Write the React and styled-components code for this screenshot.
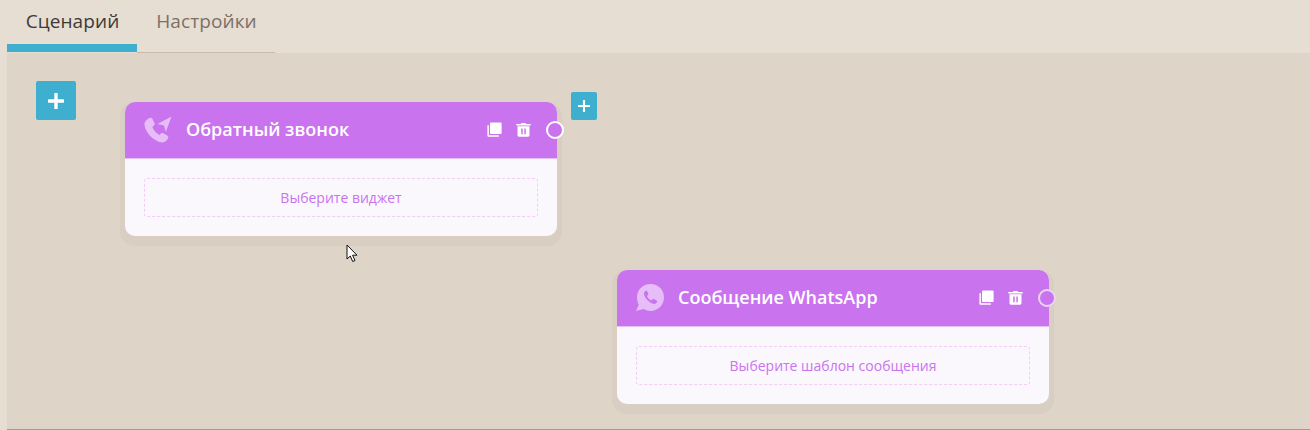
import React from 'react';
import styled, { createGlobalStyle } from 'styled-components';

const GlobalStyle = createGlobalStyle`
  html, body {
    margin: 0;
    padding: 0;
    height: 100%;
    overflow: hidden;
    background: #e6ddd3;
    font-family: "Open Sans", "Noto Sans", sans-serif;
  }
`;

const Page = styled.div`
  height: 430px;
  padding-left: 7px;
  box-sizing: border-box;
  display: flex;
  flex-direction: column;
`;

const Tabs = styled.div`
  display: flex;
  height: 53px;
  flex: none;
`;

const Tab = styled.div`
  box-sizing: border-box;
  width: ${p => p.$width}px;
  height: ${p => (p.$active ? 52 : 53)}px;
  padding: 9px 0 0 1px;
  text-align: center;
  font-size: 19px;
  letter-spacing: 0.1px;
  line-height: 25px;
  color: ${p => (p.$active ? '#3d3a38' : '#7b7167')};
  border-bottom: ${p => (p.$active ? '8px solid #3eafcf' : '1px solid #c9bbaa')};
`;

const Canvas = styled.div`
  position: relative;
  flex: 1;
  background: #ded4c7;
  border-bottom: 1px solid #9c9c9c;
`;

const AddButton = styled.div`
  position: absolute;
  left: ${p => p.$x}px;
  top: ${p => p.$y}px;
  width: ${p => p.$w}px;
  height: ${p => p.$h}px;
  display: flex;
  align-items: center;
  justify-content: center;
  background: #3eafcf;
  border-radius: 2px;
`;

const Node = styled.div`
  position: absolute;
  left: ${p => p.$x}px;
  top: ${p => p.$y}px;
  width: 432px;
  height: 134px;
  border-radius: 10px;
  background: #fbf8fd;
  box-shadow: 0 5px 1px 5px #d8cec1;
`;

const NodeHeader = styled.div`
  box-sizing: border-box;
  height: 57px;
  display: flex;
  align-items: center;
  padding: 0 0 1px 18px;
  background: #c973ee;
  border-bottom: 1px solid #e3c0f3;
  border-radius: 10px 10px 0 0;
`;

const NodeIcon = styled.svg`
  width: 30px;
  height: 30px;
  flex: none;
  fill: #e6bdf6;
`;

const NodeTitle = styled.div`
  margin: -2px 0 0 13px;
  flex: 1;
  font-size: 18px;
  font-weight: 600;
  color: #fff;
`;

const NodeActions = styled.div`
  display: flex;
  gap: 14px;
  margin-right: 26px;
`;

const ActionIcon = styled.svg`
  width: 15px;
  height: 15px;
  fill: #fff;
  display: block;
`;

const Port = styled.div`
  position: absolute;
  right: -7px;
  top: 19px;
  box-sizing: border-box;
  width: 18px;
  height: 18px;
  border-radius: 50%;
  border: 2px solid ${p => (p.$dim ? '#e8d6ee' : '#fff')};
  background: #c973ee;
`;

const NodeBody = styled.div`
  padding: 19px 19px 0;
`;

const Picker = styled.div`
  box-sizing: border-box;
  height: 39px;
  display: flex;
  align-items: center;
  justify-content: center;
  border: 1px dashed #f3cdf8;
  border-radius: 3px;
  font-size: 14px;
  color: #c973ee;
`;

const Cursor = styled.svg`
  position: absolute;
  left: 339px;
  top: 191px;
  width: 14px;
  height: 20px;
`;

const Plus = ({ size, weight }) => (
  <svg width={size} height={size} viewBox="0 0 16 16" fill="#fff">
    <rect x={8 - weight / 2} y="0" width={weight} height="16" rx="0.5" />
    <rect x="0" y={8 - weight / 2} width="16" height={weight} rx="0.5" />
  </svg>
);

const CopyIcon = () => (
  <ActionIcon viewBox="0 0 15 15">
    <path d="M4 0.500h9.600a1 1 0 0 1 1 1V11a1 1 0 0 1-1 1H4a1 1 0 0 1-1-1V1.500a1 1 0 0 1 1-1z" />
    <path d="M0.400 3.200h1.500v10h10v1.500H1.400a1 1 0 0 1-1-1z" />
  </ActionIcon>
);

const TrashIcon = () => (
  <ActionIcon viewBox="0 0 15 15">
    <path d="M0.300 2h4.500l0.700-1h4l0.700 1h4.500v1.400H0.300z" />
    <path fillRule="evenodd" d="M1.500 4.300h12v9a1.400 1.400 0 0 1-1.400 1.400H2.900a1.400 1.400 0 0 1-1.400-1.400zM5.200 6.600v5.600h1.500V6.600zM8.300 6.600v5.600h1.500V6.600z" />
  </ActionIcon>
);

const CallbackIcon = () => (
  <NodeIcon viewBox="0 0 30 30">
    <path d="M6.500 3c1.400-.6 2.400-.3 3 1l2 4.200c.4 1 .2 1.700-.6 2.400L9.300 12c1 2.900 4 6.300 7.100 8l1.500-1.500c.8-.7 1.500-.8 2.400-.3l4 2.400c1.200.8 1.300 1.800.7 3-1.200 2.300-3.200 4-5.700 3.900C11.500 27 2.200 17.500 1.500 10 1.200 6.900 3.700 4.200 6.500 3z" />
    <path d="M28.500 1.500L14.500 9l6.500 1.500 1.800 6.500z" />
  </NodeIcon>
);

const WhatsappIcon = () => (
  <NodeIcon viewBox="0 0 30 30">
    <path fillRule="evenodd" d="M15.500 1C23.200 1 29 6.800 29 14.300S23.200 28 15.500 28c-2.600 0-4.900-.7-6.900-1.900L1 28l2.700-6.300C2.600 19.700 2 17.100 2 14.300 2 6.800 7.800 1 15.500 1zM11.200 7.800c-.9.200-2.300 1.600-2.200 3.300.2 3.800 6 9.600 9.900 9.800 1.600.1 3-1.200 3.200-2.100.1-.7-.1-1-.6-1.300l-2.600-1.400c-.5-.3-1-.2-1.400.2l-1 1.100c-2-.8-3.800-2.500-4.600-4.500l1.100-1c.4-.4.500-.8.300-1.300l-1-2.100c-.3-.5-.6-.8-1.100-.7z" />
  </NodeIcon>
);

const nodes = [
  { x: 118, y: 49, title: 'Обратный звонок', hint: 'Выберите виджет', Icon: CallbackIcon },
  { x: 610, y: 217, title: 'Сообщение WhatsApp', hint: 'Выберите шаблон сообщения', Icon: WhatsappIcon, dim: true },
];

export default function App() {
  return (
    <>
      <GlobalStyle />
      <Page>
        <Tabs>
          <Tab $width={130} $active>Сценарий</Tab>
          <Tab $width={138}>Настройки</Tab>
        </Tabs>
        <Canvas>
          <AddButton $x={29} $y={28} $w={40} $h={39}><Plus size={16} weight={3.4} /></AddButton>
          <AddButton $x={564} $y={39} $w={26} $h={28}><Plus size={12} weight={2.8} /></AddButton>
          {nodes.map(({ x, y, title, hint, Icon, dim }) => (
            <Node key={title} $x={x} $y={y}>
              <NodeHeader>
                <Icon />
                <NodeTitle>{title}</NodeTitle>
                <NodeActions>
                  <CopyIcon />
                  <TrashIcon />
                </NodeActions>
              </NodeHeader>
              <Port $dim={dim} />
              <NodeBody>
                <Picker>{hint}</Picker>
              </NodeBody>
            </Node>
          ))}
          <Cursor viewBox="0 0 14 20">
            <path d="M1 1v14l3.300-3 2.400 5.500 2.300-1-2.400-5.300H11z" fill="#fff" stroke="#111" strokeWidth="1" />
          </Cursor>
        </Canvas>
      </Page>
    </>
  );
}
